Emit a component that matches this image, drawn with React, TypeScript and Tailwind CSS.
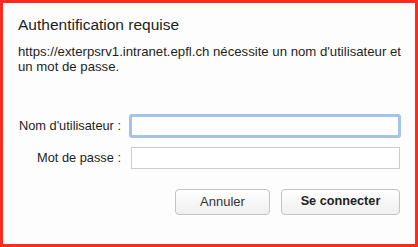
export default function App() {
  return (
    <div className="w-[418px] h-[247px] border-[3px] border-[#fb2b1e] bg-[#fdfdfd] font-['Liberation_Sans',Arial,sans-serif] text-[#1e1e1e]">
      <div className="pl-[15px] pr-[14px] pt-[13px]">
        <h1 className="text-[15.5px] leading-[18px]">Authentification requise</h1>
        <p className="mt-[10px] text-[13.2px] leading-[15px]">
          https://exterpsrv1.intranet.epfl.ch nécessite un nom d'utilisateur et un mot de passe.
        </p>

        <div className="mt-[40px] flex flex-col gap-[9px]">
          <div className="flex items-center h-[24px]">
            <label className="w-[103px] text-right text-[12.8px] whitespace-nowrap shrink-0">Nom d'utilisateur :</label>
            <input
              type="text"
              className="ml-[8px] w-[273px] h-[24px] border-[3px] border-[#a3c3ea] rounded-[3px] bg-white outline-none"
            />
          </div>
          <div className="flex items-center h-[22px]">
            <label className="w-[103px] text-right text-[12.8px] whitespace-nowrap shrink-0">Mot de passe :</label>
            <input
              type="password"
              className="ml-[10px] w-[269px] h-[22px] border border-[#cbcbcb] bg-white outline-none"
            />
          </div>
        </div>

        <div className="mt-[20px] flex justify-end gap-[11px] pr-[1px]">
          <button className="w-[95px] h-[26px] rounded-[4px] border border-[#c3c3c3] bg-gradient-to-b from-white to-[#efefef] text-[13px] text-[#333]">
            Annuler
          </button>
          <button className="w-[119px] h-[26px] rounded-[4px] border border-[#c3c3c3] bg-gradient-to-b from-white to-[#efefef] text-[12.7px] font-bold text-[#222]">
            Se connecter
          </button>
        </div>
      </div>
    </div>
  );
}
